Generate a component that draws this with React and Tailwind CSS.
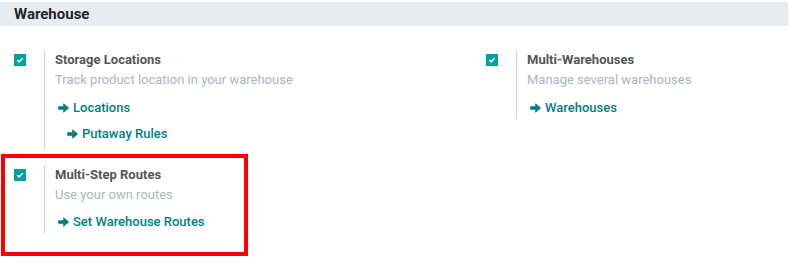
import React from "react";

function Check() {
  return (
    <div className="mt-[4px] flex h-[12px] w-[12px] items-center justify-center bg-[#00a09d]">
      <svg width="8" height="8" viewBox="0 0 8 8">
        <path d="M1.3 4.2 L3.1 5.9 L6.7 2.3" stroke="#fff" strokeWidth="1.5" fill="none" />
      </svg>
    </div>
  );
}

function Arrow() {
  return (
    <svg width="11" height="10" viewBox="0 0 11 10" className="shrink-0">
      <path
        d="M0.6 3.3 H5.2 V0.8 Q5.2 0.2 5.8 0.6 L10.6 4.6 Q11 5 10.6 5.4 L5.8 9.4 Q5.2 9.8 5.2 9.2 V6.7 H0.6 Q0.2 6.7 0.2 6.3 V3.7 Q0.2 3.3 0.6 3.3 Z"
        fill="#017e84"
      />
    </svg>
  );
}

function LinkRow({ label, indent, className }) {
  return (
    <div className={`flex h-[20px] items-center gap-[4px] text-[13px] font-medium text-[#017e84] ${indent ? "pl-[12px]" : "pl-[3px]"} ${className || ""}`}>
      <Arrow />
      <span>{label}</span>
    </div>
  );
}

function Setting({ title, desc, children, pb }) {
  return (
    <div className="flex">
      <div className="w-[44px] shrink-0 pl-[14px]">
        <Check />
      </div>
      <div className={`border-l border-[#cfcfcf] pl-[10px] ${pb}`}>
        <div className="h-[20px] text-[13px] font-bold leading-[20px] text-[#555555]">{title}</div>
        <div className="h-[20px] text-[13px] leading-[20px] text-[#adb5bd]">{desc}</div>
        {children}
      </div>
    </div>
  );
}

export default function App() {
  return (
    <div className="h-[263px] w-[789px] overflow-hidden bg-white" style={{ fontFamily: "Roboto, 'Noto Sans', sans-serif" }}>
      <div className="mt-[2px] h-[24px] w-[788px] bg-[#e9ecef] pl-[14px] text-[15px] font-bold leading-[24px] text-[#212529]">
        Warehouse
      </div>
      <div className="mt-[24px] grid grid-cols-[472px_317px]">
        <div className="flex flex-col gap-[15px]">
          <Setting title="Storage Locations" desc="Track product location in your warehouse" pb="pb-[6px]">
            <LinkRow label="Locations" className="mt-[8px]" />
            <LinkRow label="Putaway Rules" indent className="mt-[6px]" />
          </Setting>
          <div className="relative">
            <Setting title="Multi-Step Routes" desc="Use your own routes" pb="pb-[1px]">
              <LinkRow label="Set Warehouse Routes" className="mt-[7px]" />
            </Setting>
            <div className="pointer-events-none absolute left-[1px] top-[-11px] h-[102px] w-[247px] border-[4px] border-[#ff0000]" />
          </div>
        </div>
        <div>
          <Setting title="Multi-Warehouses" desc="Manage several warehouses" pb="pb-[1px]">
            <LinkRow label="Warehouses" className="mt-[8px]" />
          </Setting>
        </div>
      </div>
    </div>
  );
}
